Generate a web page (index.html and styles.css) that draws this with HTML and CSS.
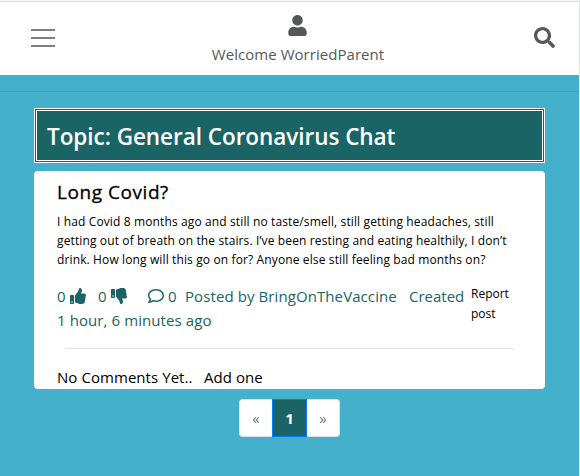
FILE: index.html
```html
<!DOCTYPE html>
<html lang="en">
<head>
<meta charset="utf-8">
<title>General Coronavirus Chat</title>
<link rel="stylesheet" href="styles.css">
</head>
<body>
<header class="navbar">
  <div class="menu"><i></i><i></i><i></i></div>
  <div class="user">
    <svg class="user-icon" viewBox="0 0 448 512"><path d="M224 256c70.700 0 128-57.300 128-128S294.700 0 224 0 96 57.300 96 128s57.300 128 128 128zm89.600 32h-16.700c-22.200 10.200-46.900 16-72.900 16s-50.600-5.800-72.900-16h-16.700C60.200 288 0 348.200 0 422.400V464c0 26.500 21.500 48 48 48h352c26.500 0 48-21.500 48-48v-41.600c0-74.200-60.200-134.400-134.400-134.400z"/></svg>
    <span class="welcome">Welcome WorriedParent</span>
  </div>
  <svg class="search-icon" viewBox="0 0 512 512"><path d="M505 442.700L405.300 343c-4.500-4.500-10.600-7-17-7H372c27.600-35.300 44-79.700 44-128C416 93.100 322.900 0 208 0S0 93.100 0 208s93.100 208 208 208c48.300 0 92.700-16.400 128-44v16.300c0 6.400 2.500 12.500 7 17l99.700 99.700c9.400 9.400 24.600 9.400 33.900 0l28.300-28.300c9.400-9.400 9.400-24.600.1-34zM208 336c-70.700 0-128-57.200-128-128 0-70.700 57.200-128 128-128 70.700 0 128 57.200 128 128 0 70.700-57.200 128-128 128z"/></svg>
</header>
<hr class="rule">
<main>
  <h1 class="topic">Topic: General Coronavirus Chat</h1>
  <article class="card">
    <h2>Long Covid?</h2>
    <p class="text">I had Covid 8 months ago and still no taste/smell, still getting headaches, still<br>getting out of breath on the stairs. I’ve been resting and eating healthily, I don’t<br>drink. How long will this go on for? Anyone else still feeling bad months on?</p>
    <div class="meta">
      <div class="info">
        <div class="row">
          <span class="vote up">0 <svg viewBox="0 0 512 512"><path d="M104 224H24c-13.255 0-24 10.745-24 24v240c0 13.255 10.745 24 24 24h80c13.255 0 24-10.745 24-24V248c0-13.255-10.745-24-24-24zM64 472c-13.255 0-24-10.745-24-24s10.745-24 24-24 24 10.745 24 24-10.745 24-24 24zM384 81.452c0 42.416-25.970 66.208-33.277 94.548h101.723c33.397 0 59.397 27.746 59.553 58.098.084 17.938-7.546 37.249-19.439 49.197l-.11.11c9.836 23.337 8.237 56.037-9.308 79.469 8.681 25.895-.069 57.704-16.382 74.757 4.298 17.598 2.244 32.575-6.148 44.632C440.202 511.587 389.616 512 346.839 512l-2.845-.001c-48.287-.017-87.806-17.598-119.560-31.725-15.957-7.099-36.821-15.887-52.651-16.178-6.540-.12-11.783-5.457-11.783-11.998v-213.770c0-3.200 1.282-6.271 3.558-8.521 39.614-39.144 56.648-80.587 89.117-113.111 14.804-14.832 20.188-37.236 25.393-58.902C282.515 39.293 291.817 0 312 0c24 0 72 8 72 81.452z"/></svg></span>
          <span class="vote down">0 <svg viewBox="0 0 512 512"><path d="M0 56v240c0 13.255 10.745 24 24 24h80c13.255 0 24-10.745 24-24V56c0-13.255-10.745-24-24-24H24C10.745 32 0 42.745 0 56zm40 200c0-13.255 10.745-24 24-24s24 10.745 24 24-10.745 24-24 24-24-10.745-24-24zm272 256c-20.183 0-29.485-39.293-33.931-57.795-5.206-21.666-10.589-44.070-25.393-58.902-32.469-32.524-49.503-73.967-89.117-113.111a11.980 11.980 0 0 1-3.558-8.521V59.901c0-6.541 5.243-11.878 11.783-11.998 15.831-.29 36.694-9.079 52.651-16.178C256.189 17.598 295.709.017 343.995 0h2.844c42.777 0 93.363.413 113.774 29.737 8.392 12.057 10.446 27.034 6.148 44.632 16.312 17.053 25.063 48.863 16.382 74.757 17.544 23.432 19.143 56.132 9.308 79.469l.11.11c11.893 11.949 19.523 31.259 19.439 49.197-.156 30.352-26.157 58.098-59.553 58.098H350.723C358.030 364.340 384 388.132 384 430.548 384 504 336 512 312 512z"/></svg></span>
          <span class="vote comments"><svg viewBox="0 0 512 512"><path d="M256 32C114.600 32 0 125.100 0 240c0 47.600 19.900 91.200 52.900 126.300C38 405.700 7 439.100 6.500 439.500c-6.600 7-8.400 17.200-4.600 26S14.400 480 24 480c61.500 0 110-25.700 139.100-46.300C192 442.800 223.200 448 256 448c141.400 0 256-93.100 256-208S397.400 32 256 32zm0 368c-26.700 0-53.100-4.100-78.400-12.100l-22.700-7.200-19.500 13.800c-14.300 10.100-33.900 21.400-57.500 29 7.300-12.100 14.400-25.700 19.900-40.200l10.600-28.100-20.600-21.800C69.700 314.100 48 282.200 48 240c0-88.200 93.300-160 208-160s208 71.800 208 160-93.300 160-208 160z"/></svg> 0</span>
          <span class="author">Posted by BringOnTheVaccine</span>
          <span class="created">Created</span>
        </div>
        <div class="ago">1 hour, 6 minutes ago</div>
      </div>
      <div class="report">Report<br>post</div>
    </div>
    <hr class="divider">
    <div class="foot"><span class="none">No Comments Yet..</span><span class="add">Add one</span></div>
  </article>
  <nav class="pages"><span class="page prev">«</span><span class="page active">1</span><span class="page next">»</span></nav>
</main>
</body>
</html>
```

FILE: styles.css
```css
* { box-sizing: border-box; }
body {
  margin: 0;
  width: 580px;
  height: 476px;
  overflow: hidden;
  background: #44b0cc;
  border-right: 1px solid #dfe7ea;
  font-family: "Open Sans", "Noto Sans", sans-serif;
  font-size: 15px;
  line-height: 24px;
  color: #000;
  white-space: nowrap;
}
svg { display: block; fill: currentColor; }
.navbar {
  display: grid;
  grid-template-columns: 1fr auto 1fr;
  height: 75px;
  padding: 0 24px 0 31px;
  background: #fff;
  border-top: 1px solid #f3f3f3;
  box-shadow: inset 0 1px #dedede;
  color: #565759;
}
.menu { display: grid; gap: 6px; align-content: start; padding: 28px 0 0; margin-right: -10px; }
.menu i { width: 24px; height: 2px; background: #808080; }
.user { display: flex; flex-direction: column; align-items: center; padding: 14px 0 0 10px; }
.user-icon { width: 19px; height: 21px; }
.welcome { margin-top: 6px; letter-spacing: 0.040px; }
.search-icon { width: 21px; height: 21px; justify-self: end; margin-top: 26px; }
.rule { margin: 16px 0; border: 0; height: 1px; background: #3b9cb7; }
main { padding: 0 34px; }
.topic {
  margin: 0 0 8px;
  height: 55px;
  padding: 10px;
  border: 3px double #fff;
  background: #1a6466;
  color: #fff;
  font-size: 22.500px;
  font-weight: 600;
  line-height: 31px;
  letter-spacing: -0.040px;
}
.card { height: 218px; padding: 7px 23px 0; background: #fff; border-radius: 4px; }
.card h2 { margin: 0; font-size: 19px; font-weight: 500; line-height: 28px; letter-spacing: 0.550px; -webkit-text-stroke: 0.300px; }
.text { margin: 6px 0 0; font-size: 12px; line-height: 19px; letter-spacing: 0.125px; }
.meta { display: flex; margin-top: 15px; color: #1a6466; }
.info { width: 414px; }
.row { display: flex; }
.vote { display: flex; align-items: center; gap: 4px; }
.vote svg { width: 16px; height: 16px; }
.up { width: 41px; }
.down { width: 50px; }
.comments { width: 37px; }
.author { width: 224px; letter-spacing: 0.090px; }
.ago { letter-spacing: 0.090px; }
.report { font-size: 12px; line-height: 20px; color: #000; }
.divider { margin: 16px 8px; border: 0; height: 1px; background: #e2e2e2; }
.foot { display: flex; letter-spacing: 0.060px; }
.none { width: 147px; }
.pages { display: flex; justify-content: center; margin-top: 10px; }
.page {
  width: 33px;
  height: 38px;
  border: 1px solid #dee2e6;
  background: #fff;
  color: #6c757d;
  line-height: 36px;
  text-align: center;
}
.prev { border-radius: 4px 0 0 4px; border-right: 0; }
.next { border-radius: 0 4px 4px 0; border-left: 0; }
.active { width: 35px; border-color: #007bff; background: #1a6466; color: #fff; font-weight: 700; }
```
